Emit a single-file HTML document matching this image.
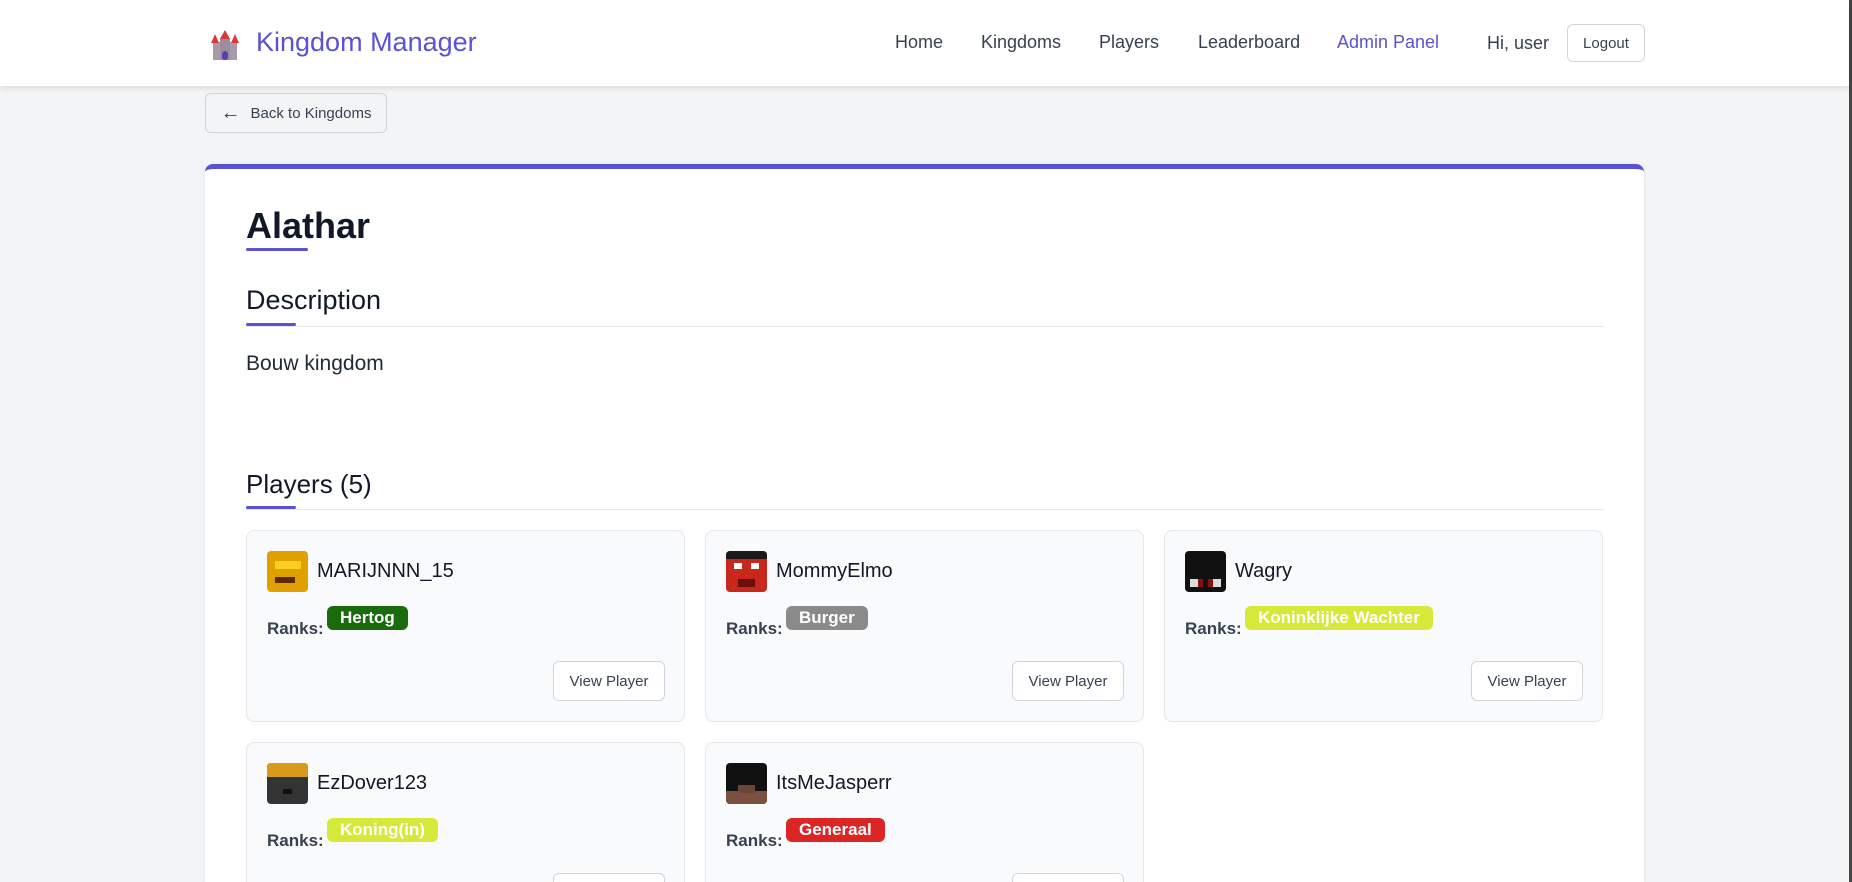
<!DOCTYPE html>
<html><head><meta charset="utf-8"><style>
*{box-sizing:border-box;margin:0;padding:0}
html,body{width:1852px;height:882px;overflow:hidden}
body{background:#f3f4f6;font-family:"Liberation Sans",sans-serif;position:relative}
#wrap{position:absolute;left:0;top:0;width:1852px;height:882px;overflow:hidden}
.abs{position:absolute}
header{position:absolute;left:0;top:0;width:1849px;height:86px;background:#fff;box-shadow:0 2px 6px rgba(0,0,0,.1)}
.nav{position:absolute;top:32px;font-size:18px;color:#374151;white-space:nowrap}
.btn{position:absolute;border:1px solid #d1d5db;border-radius:6px;background:#fff;color:#374151;font-size:15px;display:flex;align-items:center;justify-content:center}
.card{position:absolute;left:205px;top:164px;width:1439px;height:718px;background:#fff;border-radius:8px 8px 0 0;border-top:5px solid #5a52d5;box-shadow:0 1px 4px rgba(0,0,0,.08)}
h{position:absolute;color:#111827;font-weight:600;white-space:nowrap}
.ul{position:absolute;height:3px;background:#5a52d5;border-radius:2px}
.hr{position:absolute;height:1px;background:#e5e7eb;left:246px;width:1358px}
.pc{position:absolute;width:439px;height:192px;background:#f9fafb;border:1px solid #e5e7eb;border-radius:8px;overflow:hidden}
.av{position:absolute;left:20px;top:20px;width:41px;height:41px;border-radius:4px;overflow:hidden}
.nm{position:absolute;left:70px;top:29px;font-size:20px;color:#111827}
.rk{position:absolute;left:20px;top:88px;font-size:17px;font-weight:bold;color:#374151}
.bd{position:absolute;left:80px;top:75px;height:24px;border-radius:6px;color:#fff;font-weight:bold;font-size:17px;padding:0 13px;line-height:24px;white-space:nowrap}
.vp{position:absolute;left:306px;top:130px;width:112px;height:40px;border:1px solid #d1d5db;border-radius:6px;background:#fff;font-size:15px;color:#374151;display:flex;align-items:center;justify-content:center}
</style></head><body><div id="wrap">
<div class="abs" style="right:0;top:0;width:3px;height:882px;background:#444"></div>
<header>
<svg class="abs" style="left:210px;top:30px" width="30" height="30" viewBox="0 0 30 30">
<rect x="3" y="12" width="24" height="18" fill="#a89aa8"/>
<rect x="10" y="8" width="10" height="22" fill="#9b8da0"/>
<polygon points="15,0 10,9 20,9" fill="#d83a3a"/>
<polygon points="5,4 1,13 9,13" fill="#d83a3a"/>
<polygon points="25,4 21,13 29,13" fill="#d83a3a"/>
<rect x="12" y="21" width="6" height="9" rx="3" fill="#5a3fb0"/>
</svg>
<div class="abs" style="left:256px;top:27px;font-size:27px;color:#5a52d5;font-weight:500">Kingdom Manager</div>
<div class="nav" style="left:895px">Home</div>
<div class="nav" style="left:981px">Kingdoms</div>
<div class="nav" style="left:1099px">Players</div>
<div class="nav" style="left:1198px">Leaderboard</div>
<div class="nav" style="left:1337px;color:#5a52d5">Admin Panel</div>
<div class="nav" style="left:1487px;top:33px">Hi, user</div>
<div class="btn" style="left:1567px;top:24px;width:78px;height:38px">Logout</div>
</header>
<div class="btn" style="left:205px;top:93px;width:182px;height:40px;background:#f3f4f6;font-size:15px"><span style="font-size:20px;margin-right:10px">&larr;</span>Back to Kingdoms</div>
<div class="card"></div>
<h style="left:246px;top:205px;font-size:36px;font-weight:bold">Alathar</h>
<div class="ul" style="left:246px;top:248px;width:62px"></div>
<h style="left:246px;top:285px;font-size:27px;font-weight:500">Description</h>
<div class="hr" style="top:326px"></div>
<div class="ul" style="left:246px;top:323px;width:50px"></div>
<div class="abs" style="left:246px;top:352px;font-size:21px;color:#1f2937">Bouw kingdom</div>
<h style="left:246px;top:469px;font-size:26px;font-weight:500">Players (5)</h>
<div class="hr" style="top:509px"></div>
<div class="ul" style="left:246px;top:506px;width:50px"></div>

<div class="pc" style="left:246px;top:530px">
<div class="av" style="background:#e0a000"><div class="abs" style="left:8px;top:10px;width:26px;height:8px;background:#f7d020"></div><div class="abs" style="left:8px;top:26px;width:20px;height:6px;background:#5a2a00"></div></div>
<div class="nm">MARIJNNN_15</div><div class="rk">Ranks:</div><div class="bd" style="background:#1a6b0c">Hertog</div><div class="vp">View Player</div></div>
<div class="pc" style="left:705px;top:530px">
<div class="av" style="background:#c8281c"><div class="abs" style="left:0;top:0;width:41px;height:8px;background:#1a1a1a"></div><div class="abs" style="left:8px;top:12px;width:8px;height:6px;background:#fff"></div><div class="abs" style="left:25px;top:12px;width:8px;height:6px;background:#fff"></div><div class="abs" style="left:12px;top:28px;width:17px;height:8px;background:#6a0e0e"></div></div>
<div class="nm">MommyElmo</div><div class="rk">Ranks:</div><div class="bd" style="background:#8a8a8a">Burger</div><div class="vp">View Player</div></div>
<div class="pc" style="left:1164px;top:530px">
<div class="av" style="background:#111"><div class="abs" style="left:5px;top:28px;width:8px;height:8px;background:#ddd"></div><div class="abs" style="left:28px;top:28px;width:8px;height:8px;background:#ddd"></div><div class="abs" style="left:13px;top:28px;width:5px;height:8px;background:#8a1010"></div><div class="abs" style="left:23px;top:28px;width:5px;height:8px;background:#8a1010"></div></div>
<div class="nm">Wagry</div><div class="rk">Ranks:</div><div class="bd" style="background:#d6e83a">Koninklijke Wachter</div><div class="vp">View Player</div></div>

<div class="pc" style="left:246px;top:742px;height:140px;border-bottom:none;border-radius:8px 8px 0 0">
<div class="av" style="background:#333"><div class="abs" style="left:0;top:0;width:41px;height:14px;background:#d99a1c"></div><div class="abs" style="left:16px;top:26px;width:9px;height:5px;background:#111"></div></div>
<div class="nm">EzDover123</div><div class="rk">Ranks:</div><div class="bd" style="background:#d6e83a">Koning(in)</div><div class="vp">View Player</div></div>
<div class="pc" style="left:705px;top:742px;height:140px;border-bottom:none;border-radius:8px 8px 0 0">
<div class="av" style="background:#111"><div class="abs" style="left:0;top:28px;width:41px;height:13px;background:#7a5040"></div><div class="abs" style="left:12px;top:22px;width:17px;height:8px;background:#6b4535"></div></div>
<div class="nm">ItsMeJasperr</div><div class="rk">Ranks:</div><div class="bd" style="background:#dc2626">Generaal</div><div class="vp">View Player</div></div>
</div></body></html>
